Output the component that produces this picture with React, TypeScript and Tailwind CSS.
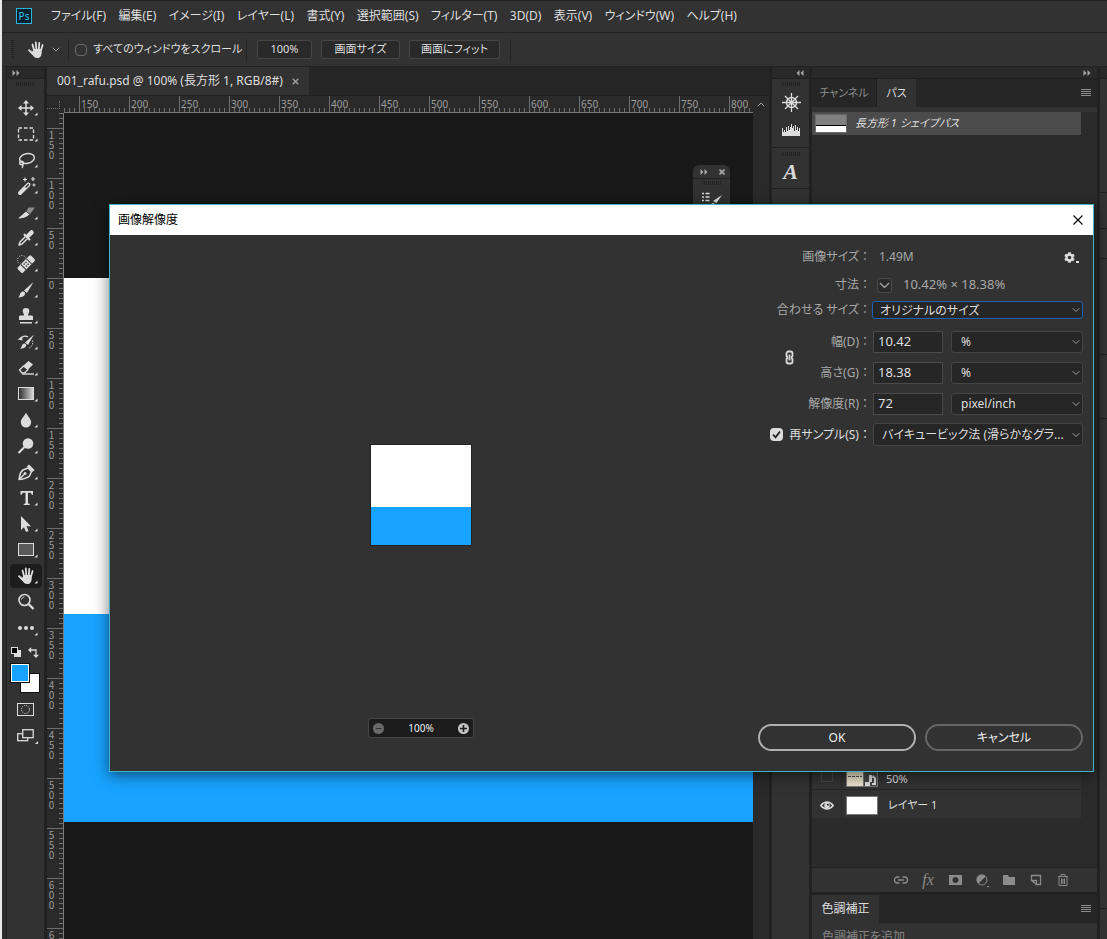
import { ReactNode } from 'react';
import { FaCog } from 'react-icons/fa';

const MENU = [
    'ファイル(F)',
    '編集(E)',
    'イメージ(I)',
    'レイヤー(L)',
    '書式(Y)',
    '選択範囲(S)',
    'フィルター(T)',
    '3D(D)',
    '表示(V)',
    'ウィンドウ(W)',
    'ヘルプ(H)',
];

const H_RULER = [150, 200, 250, 300, 350, 400, 450, 500, 550, 600, 650, 700, 750, 800];
const V_RULER = [150, 100, 50, 0, 50, 100, 150, 200, 250, 300, 350, 400, 450, 500, 550, 600, 650];

const HandShape = () => (
    <g>
        <path d="M11.5 11.5 13 14.5V11h8.5v4.5c0 2.500-1.500 4.500-4 4.500-3 0-4-1.500-5-3.500z" fill="#dcdcdc" />
        <path
            d="M14 12 12.500 6.500M16.300 11 15.800 4.500M18.800 11 19.300 4.800M21 12.500 22.600 7M12.800 16 9 12.200"
            fill="none"
            stroke="#dcdcdc"
            strokeWidth="1.800"
            strokeLinecap="round"
        />
        <path d="M10.500 13.500 14 18l4 2 3-2.500.5-4" fill="#dcdcdc" />
    </g>
);

type Tool = { label: string; icon: ReactNode; active?: boolean; plain?: boolean };

const TOOLS: Tool[] = [
    {
        label: '移動ツール',
        icon: (
            <>
                <path d="M16 6v12M10 12h12" stroke="#dcdcdc" strokeWidth="1.500" />
                <path d="m16 4 3 3.500h-6zM16 20l3-3.500h-6zM8 12l3.500-3v6zM24 12l-3.500-3v6z" fill="#dcdcdc" />
            </>
        ),
    },
    {
        label: '長方形選択ツール',
        icon: <rect x="8.500" y="6" width="15" height="12" fill="none" stroke="#dcdcdc" strokeWidth="1.300" strokeDasharray="3.500 2" />,
    },
    {
        label: 'なげなわツール',
        icon: (
            <g fill="none" stroke="#dcdcdc" strokeWidth="1.400">
                <ellipse cx="17" cy="10.500" rx="7.500" ry="4.800" transform="rotate(-12 17 10.500)" />
                <circle cx="11.500" cy="15" r="1.800" />
                <path d="M12.500 16.500c1 1.500.5 2.500-.5 3.500" />
            </g>
        ),
    },
    {
        label: '自動選択ツール',
        icon: (
            <>
                <path d="m10 19 8.500-8.500" stroke="#dcdcdc" strokeWidth="4" strokeLinecap="round" />
                <path d="m16 13 2.500-2.500" stroke="#323232" strokeWidth="1.400" strokeLinecap="round" />
                <path d="M15 3.500v4M13 5.500h4M23 3v4M21 5h4M24 9.500v3M22.500 11h3" stroke="#dcdcdc" strokeWidth="1.200" />
            </>
        ),
    },
    {
        label: 'スライスツール',
        icon: (
            <>
                <path d="M8 18.500 16 11.500l3.500 3C16 17.500 12 18.500 8 18.500z" fill="#dcdcdc" />
                <path d="M16.500 11 18.500 7.500H25l-5 6.500z" fill="#8c8c8c" />
            </>
        ),
    },
    {
        label: 'スポイトツール',
        icon: (
            <>
                <path d="m9 19 1-3 6-6 2 2-6 6z" fill="none" stroke="#dcdcdc" strokeWidth="1.500" strokeLinejoin="round" />
                <path d="m14.500 8.500 5 5" stroke="#dcdcdc" strokeWidth="2" strokeLinecap="round" />
                <path d="m18.500 9.500 3-3" stroke="#dcdcdc" strokeWidth="4.500" strokeLinecap="round" />
            </>
        ),
    },
    {
        label: 'スポット修復ブラシツール',
        icon: (
            <>
                <circle cx="12" cy="8" r="4.500" fill="none" stroke="#dcdcdc" strokeWidth="1" strokeDasharray="1 1.500" />
                <g transform="rotate(-45 16 12)">
                    <rect x="6.500" y="8.500" width="19" height="7.500" rx="1.500" fill="#dcdcdc" />
                    <path d="M12 8.500v7.500M20 8.500v7.500" stroke="#323232" strokeWidth="1" />
                    <path d="M14 10.700h4M14 13.700h4" stroke="#323232" strokeWidth="1.400" strokeDasharray="1.400 1.200" />
                </g>
            </>
        ),
    },
    {
        label: 'ブラシツール',
        icon: (
            <>
                <path d="M23.500 4 17 15l-3-2.500z" fill="#dcdcdc" />
                <path d="M13.200 13.500c1.600.3 2.300 1.400 1.800 2.800-.8 2.200-3.500 3.200-7 3.200 1.500-1 1.500-2 2-3.500.6-1.600 1.800-2.700 3.200-2.500z" fill="#dcdcdc" />
            </>
        ),
    },
    {
        label: 'コピースタンプツール',
        icon: (
            <path
                d="M16 4a3.300 3.300 0 0 1 3.300 3.300c0 1.500-1.300 2.200-1.300 4.200h3.500c1 0 1.500.5 1.500 1.500v3H9v-3c0-1 .5-1.500 1.500-1.500H14c0-2-1.300-2.700-1.300-4.200A3.300 3.300 0 0 1 16 4zM10 18h12v1.500H10z"
                fill="#dcdcdc"
            />
        ),
    },
    {
        label: 'ヒストリーブラシツール',
        icon: (
            <>
                <path d="M24 4.500 18 15l-3-2.500z" fill="#dcdcdc" />
                <path d="M14.500 13.500c1.500.3 2 1.400 1.500 2.600-.8 1.800-3 2.700-6 2.700 1.400-1 1.300-1.700 1.800-3 .5-1.300 1.500-2.500 2.700-2.300z" fill="#dcdcdc" />
                <path d="M10 9c2-3 5.500-3.300 8-2" fill="none" stroke="#dcdcdc" strokeWidth="1.400" />
                <path d="m7.500 9.500 4.500-3 .5 4z" fill="#dcdcdc" />
                <path d="M22.500 10.500c1 3-.5 6.500-4 8" fill="none" stroke="#dcdcdc" strokeDasharray="1.300 1.300" />
            </>
        ),
    },
    {
        label: '消しゴムツール',
        icon: (
            <>
                <path d="m13.500 9.500 5-4.500 4.500 3.500-5 5z" fill="#dcdcdc" />
                <path d="m13.500 10-4 4 2.500 3h2.500l3.500-3.500z" fill="none" stroke="#dcdcdc" strokeWidth="1.300" strokeLinejoin="round" />
                <path d="M12 18h12" stroke="#dcdcdc" strokeWidth="1.400" />
            </>
        ),
    },
    {
        label: 'グラデーションツール',
        icon: (
            <>
                <defs>
                    <linearGradient id="grad">
                        <stop offset="0" stopColor="#2a2a2a" />
                        <stop offset="1" stopColor="#dcdcdc" />
                    </linearGradient>
                </defs>
                <rect x="8.500" y="5.500" width="15" height="12" fill="url(#grad)" stroke="#dcdcdc" />
            </>
        ),
    },
    {
        label: 'ぼかしツール',
        icon: <path d="M16 4.500c1 3 5.200 6.500 5.200 9.700a5.200 5.200 0 0 1-10.400 0C10.800 11 15 7.500 16 4.500z" fill="#dcdcdc" />,
    },
    {
        label: '覆い焼きツール',
        icon: (
            <>
                <circle cx="18" cy="9.500" r="5.300" fill="#dcdcdc" />
                <path d="m8.500 19 6-6" stroke="#dcdcdc" strokeWidth="2" />
            </>
        ),
    },
    {
        label: 'ペンツール',
        icon: (
            <>
                <path d="M9 19.500c.5-4 1.500-8 4-9.500l5-2 3.500 3.500-2 4.500c-2 2.300-6 3-10.500 3.500zm0 0 5-5" fill="none" stroke="#dcdcdc" strokeWidth="1.500" strokeLinejoin="round" />
                <circle cx="15" cy="13.500" r="1.500" fill="#dcdcdc" />
                <path d="m18 5.500 5.500 5.500" stroke="#dcdcdc" strokeWidth="3" />
            </>
        ),
    },
    {
        label: '横書き文字ツール',
        icon: (
            <path d="M10.500 5H23v3.800h-1.300c-.2-1.500-.8-2.100-2-2.100H18v10c0 .8.400 1 1.800 1.100v1.200h-6.100v-1.200c1.400-.1 1.800-.3 1.800-1.100v-10h-1.700c-1.200 0-1.800.6-2 2.100h-1.300z" fill="#dcdcdc" />
        ),
    },
    {
        label: 'パスコンポーネント選択ツール',
        icon: <path d="M11 4v14l3-2.800 2 4.800 2.500-1-2-4.700H21z" fill="#dcdcdc" />,
    },
    {
        label: '長方形ツール',
        icon: <rect x="8.500" y="5.500" width="15" height="12" fill="#5a5a5a" stroke="#dcdcdc" />,
    },
    { label: '手のひらツール', icon: <HandShape />, active: true },
    {
        label: 'ズームツール',
        plain: true,
        icon: (
            <g fill="none" stroke="#dcdcdc">
                <circle cx="14.500" cy="10" r="5.500" strokeWidth="1.600" />
                <path d="m18.500 14 5 5" strokeWidth="2.400" />
                <path d="M11.500 9.500c.3-1.500 1.300-2.300 2.800-2.500" />
            </g>
        ),
    },
    {
        label: 'ツールバーを編集',
        icon: (
            <g fill="#dcdcdc">
                <circle cx="10" cy="12" r="2" />
                <circle cx="16" cy="12" r="2" />
                <circle cx="22" cy="12" r="2" />
            </g>
        ),
    },
];

const Grip = () => (
    <div className="mx-auto h-1 w-[19px] bg-[repeating-linear-gradient(90deg,#242424_0_1px,transparent_1px_2px)]" />
);

const Arrows = ({ left = false }: { left?: boolean }) => (
    <svg width="8" height="6" viewBox="0 0 8 6" className={left ? 'rotate-180' : ''}>
        <path d="M.5 0 3.500 3 .5 6zM4.500 0l3 3-3 3z" fill="#a8a8a8" />
    </svg>
);

const Chevron = ({ className = '', size = 8 }: { className?: string; size?: number }) => (
    <svg width={size} height={size * 0.625} viewBox="0 0 8 5" className={className}>
        <path d="m.7.7 3.300 3.300L7.300.7" fill="none" stroke="#a0a0a0" />
    </svg>
);

const Burger = () => (
    <button aria-label="パネルメニュー">
        <svg width="10" height="8" viewBox="0 0 10 8">
            <path d="M0 .5h10M0 2.500h10M0 4.500h10M0 6.500h10" stroke="#8c8c8c" />
        </svg>
    </button>
);

const Toolbar = () => (
    <aside className="flex w-[37px] shrink-0 flex-col bg-[#323232]">
        <div className="flex h-3 shrink-0 items-center border-b border-[#222] bg-[#292929] pl-[5px]">
            <Arrows />
        </div>
        <div className="pt-[3px] pb-[9px]">
            <Grip />
        </div>
        {TOOLS.map(({ label, icon, active, plain }) => (
            <button key={label} aria-label={label} className="flex h-[26px] shrink-0 items-center pl-[3px]">
                <svg width="32" height="24" viewBox="0 0 32 24" className={active ? 'rounded-sm bg-[#1d1d1d]' : ''}>
                    {icon}
                    {!plain && <path d="M27.500 16.500v3h-3z" fill="#dcdcdc" />}
                </svg>
            </button>
        ))}
        <div className="flex h-[22px] shrink-0 items-center justify-between pr-[5px] pl-1">
            <button aria-label="初期設定の描画色と背景色">
                <svg width="10" height="10" viewBox="0 0 10 10">
                    <rect x="3" y="3" width="7" height="7" fill="#dcdcdc" />
                    <rect x=".5" y=".5" width="6" height="6" fill="#000" stroke="#dcdcdc" />
                </svg>
            </button>
            <button aria-label="描画色と背景色を入れ替え">
                <svg width="11" height="11" viewBox="0 0 11 11">
                    <path d="M2.500 3H8v5.500" fill="none" stroke="#dcdcdc" strokeWidth="1.300" />
                    <path d="m0 3 3.200-3v6zM8 11 5 7.700h6z" fill="#dcdcdc" />
                </svg>
            </button>
        </div>
        <svg width="30" height="30" viewBox="0 0 30 30" className="ml-[3px] shrink-0">
            <rect x="10.500" y="10.500" width="19" height="19" fill="#fff" stroke="#111" />
            <rect x=".5" y=".5" width="19" height="19" fill="#111" stroke="#111" />
            <rect x="1.500" y="1.500" width="17" height="17" fill="#17a3ff" stroke="#fff" />
        </svg>
        <button aria-label="クイックマスク" className="mt-[10px] ml-[10px]">
            <svg width="17" height="13" viewBox="0 0 17 13">
                <rect x=".5" y=".5" width="16" height="12" fill="none" stroke="#dcdcdc" />
                <circle cx="8.500" cy="6.500" r="4" fill="none" stroke="#dcdcdc" strokeDasharray="1 1.100" />
            </svg>
        </button>
        <button aria-label="スクリーンモード" className="mt-[12px] ml-[10px]">
            <svg width="22" height="17" viewBox="0 0 22 17">
                <rect x=".7" y="5.700" width="10" height="7" fill="none" stroke="#dcdcdc" strokeWidth="1.300" />
                <rect x="5.700" y="1.700" width="10.500" height="8" fill="#323232" stroke="#dcdcdc" strokeWidth="1.300" />
                <path d="M21 13v3h-3z" fill="#dcdcdc" />
            </svg>
        </button>
    </aside>
);

const Workspace = () => (
    <main className="relative flex min-w-0 flex-1 flex-col bg-[#262626]">
        <div className="flex h-7 shrink-0">
            <div className="flex w-[262px] items-center justify-between bg-[#323232] px-[10px] text-[12px] text-[#dedede]">
                <span className="whitespace-nowrap">001_rafu.psd @ 100% (長方形 1, RGB/8#)</span>
                <button aria-label="閉じる">
                    <svg width="7" height="7" viewBox="0 0 7 7">
                        <path d="m.7.7 5.600 5.600M6.300.7.7 6.300" stroke="#9a9a9a" strokeWidth="1.500" />
                    </svg>
                </button>
            </div>
        </div>
        <div className="flex h-[18px] shrink-0 border-t border-[#1f1f1f] bg-[#2a2a2a]">
            <div className="flex w-[17px] shrink-0">
                <div className="mt-[5px] h-[8px] w-[13px] border-r border-b border-dotted border-[#6e6e6e]" />
            </div>
            <div className="flex w-[689px] min-w-0 shrink overflow-hidden border-b border-[#7a7a7a] text-[10px] leading-4 text-[#9c9c9c]">
                <div className="w-[15px] shrink-0 bg-[repeating-linear-gradient(90deg,#6e6e6e_0_1px,transparent_1px_5px)] bg-[length:100%_4px] bg-bottom bg-no-repeat" />
                {H_RULER.map((n) => (
                    <div
                        key={n}
                        className="w-[50px] shrink-0 border-l border-[#6e6e6e] bg-[repeating-linear-gradient(90deg,transparent_0_4px,#6e6e6e_4px_5px)] bg-[length:100%_4px] bg-bottom bg-no-repeat pl-px"
                    >
                        {n}
                    </div>
                ))}
            </div>
            <div className="flex flex-1 items-center justify-center">
                <Chevron className="rotate-180" />
            </div>
        </div>
        <div className="flex min-h-0 flex-1">
            <div className="flex w-[17px] shrink-0 flex-col overflow-hidden border-r border-[#7a7a7a] bg-[#2a2a2a] font-['Noto_Sans_CJK_JP',sans-serif] text-[10px] text-[#9c9c9c]">
                <div className="h-[15px] shrink-0 bg-[repeating-linear-gradient(#6e6e6e_0_1px,transparent_1px_5px)] bg-[length:4px_100%] bg-right bg-no-repeat" />
                {V_RULER.map((n, i) => (
                    <div
                        key={i}
                        className="flex h-[50px] shrink-0 border-t border-[#6e6e6e] bg-[repeating-linear-gradient(transparent_0_4px,#6e6e6e_4px_5px)] bg-[length:4px_100%] bg-right bg-no-repeat pt-px"
                    >
                        <span className="w-2 leading-[8px] [text-orientation:upright] [writing-mode:vertical-rl]">{n}</span>
                    </div>
                ))}
            </div>
            <div className="flex min-w-0 flex-1 flex-col bg-[#191919]">
                <div className="h-[165px] shrink-0" />
                <div className="h-[336px] shrink-0 bg-white" />
                <div className="h-[208px] shrink-0 bg-[#17a3ff]" />
            </div>
            <div className="w-4 shrink-0 bg-[#2a2a2a]" />
        </div>
        {/* floating brush panel */}
        <div className="absolute top-[98px] right-[39px] w-[37px] rounded-t-md bg-[#323232]">
            <div className="flex h-[14px] items-center justify-between border-b border-[#222] pr-[5px] pl-[7px]">
                <Arrows />
                <svg width="6" height="6" viewBox="0 0 6 6">
                    <path d="m.5.5 5 5M5.500.5l-5 5" stroke="#a8a8a8" strokeWidth="1.600" />
                </svg>
            </div>
            <div className="pt-[2px]">
                <Grip />
            </div>
            <svg width="22" height="20" viewBox="0 0 22 20" className="mt-1 ml-2">
                <path d="M1 4.500h2M1 8h2M1 11.500h2M4.500 4.500h4M4.500 8h4M4.500 11.500h4" stroke="#dcdcdc" strokeWidth="1.600" />
                <path d="M21 6 15.500 14 12 12z" fill="#dcdcdc" />
                <path d="M9 18c1-4 3-5 5-3-1 2-3 3-5 3z" fill="#dcdcdc" />
            </svg>
        </div>
    </main>
);

const IconDock = () => (
    <aside className="flex w-[37px] shrink-0 flex-col bg-[#323232]">
        <div className="flex h-3 items-center justify-end border-b border-[#1f1f1f] bg-[#292929] pr-[5px]">
            <Arrows left />
        </div>
        <div className="flex h-[69px] flex-col items-center border-b border-[#1f1f1f] pt-[3px]">
            <Grip />
            <svg width="19" height="19" viewBox="0 0 19 19" className="mt-[7px] ml-px" fill="none" stroke="#dcdcdc">
                <circle cx="9.500" cy="9.500" r="5" strokeWidth="1.500" />
                <path d="M9.500 0v19M0 9.500h19M3 3l13 13M16 3 3 16" strokeWidth="1.300" />
                <circle cx="9.500" cy="9.500" r="1.500" fill="#dcdcdc" />
            </svg>
            <svg width="18" height="12" viewBox="0 0 18 12" className="mt-3 ml-px">
                <path d="M0 12V4h1v4h1V6h1v2h1V3h1v4h1V2h1v4h1V3h1V0h1v4h1V2h1v5h1V1h1v5h1V3h1v4h1V4h1v8z" fill="#dcdcdc" />
            </svg>
        </div>
        <div className="flex h-[41px] flex-col items-center border-b border-[#1f1f1f] pt-1">
            <Grip />
            <span className="mt-1 font-['Liberation_Serif',serif] text-[22px] leading-6 font-bold text-[#dcdcdc] italic">A</span>
        </div>
    </aside>
);

const LayerButton = ({ label, children }: { label: string; children: ReactNode }) => (
    <button aria-label={label}>
        <svg width="16" height="16" viewBox="0 0 16 16" fill="none" stroke="#8c8c8c">
            {children}
        </svg>
    </button>
);

const Panels = () => (
    <aside className="flex w-[285px] shrink-0 flex-col bg-[#2b2b2b] text-[11px] text-[#dedede]">
        <div className="flex h-3 shrink-0 items-center justify-end border-b border-[#1f1f1f] bg-[#292929] pr-[6px]">
            <Arrows />
        </div>
        <section className="flex min-h-0 flex-1 flex-col">
            <div className="flex h-7 shrink-0 items-stretch bg-[#262626] pr-[6px]">
                <button className="w-[65px] border-r border-[#1f1f1f] text-[#8c8c8c] [font-feature-settings:'palt']">チャンネル</button>
                <button className="w-[39px] bg-[#323232] [font-feature-settings:'palt']">パス</button>
                <div className="flex flex-1 items-center justify-end">
                    <Burger />
                </div>
            </div>
            <div className="h-[5px] shrink-0 bg-[#323232]" />
            <div className="mr-4 flex h-[23px] shrink-0 items-center gap-2 bg-[#4b4b4b] pl-[3px]">
                <div className="flex h-[19px] w-8 flex-col border border-[#6a6a6a] bg-[#808080]">
                    <div className="mt-auto h-[7px] border-t border-black bg-white" />
                </div>
                <span className="italic [font-feature-settings:'palt']">長方形 1 シェイプパス</span>
            </div>
        </section>
        <section className="shrink-0">
            {/* layer rows */}
            <div className="mr-4 flex h-[30px] items-center border-b border-[#252525] bg-[#323232]">
                <div className="flex w-[30px] items-end justify-center self-stretch border-r border-[#292929] pb-[7px]">
                    <input type="checkbox" aria-label="表示" className="size-3 appearance-none border border-[#454545]" />
                </div>
                <svg width="32" height="20" viewBox="0 0 32 20" className="mb-[2px] ml-1 self-end">
                    <rect width="32" height="20" fill="#777" />
                    <rect x="1" y="1" width="16" height="18" fill="#e6dfc8" />
                    <path d="M2 9.500h14" stroke="#555" strokeDasharray="3 1" />
                    <rect x="18" y="1" width="13" height="18" fill="#444" />
                    <path d="M19 15h5v4h-5zM23 8h3v7h-3zM27 8l3 3v7h-4v-2h2v-5h-2z" fill="#dcdcdc" />
                </svg>
                <span className="ml-2 self-end pb-[2px]">50%</span>
            </div>
            <div className="mr-4 flex h-[28px] items-center bg-[#323232]">
                <button aria-label="レイヤーの表示/非表示" className="flex w-[30px] items-center justify-center self-stretch border-r border-[#292929] pt-[2px]">
                    <svg width="14" height="9" viewBox="0 0 14 9">
                        <path d="M.8 4.500C3 1.800 5 1 7 1s4 .8 6.200 3.500C11 7.200 9 8 7 8S3 7.200.8 4.500z" fill="none" stroke="#dcdcdc" strokeWidth="1.500" />
                        <circle cx="7" cy="4.500" r="2.700" fill="#dcdcdc" />
                        <circle cx="7.800" cy="3.800" r="1" fill="#323232" />
                    </svg>
                </button>
                <div className="mt-[2px] ml-1 h-[19px] w-8 border border-[#777] bg-white" />
                <span className="ml-[10px] pt-[3px] [font-feature-settings:'palt']">レイヤー 1</span>
            </div>
            <div className="h-[49px]" />
            <div className="flex h-[25px] items-center justify-end gap-[11px] border-t border-[#222] bg-[#323232] pr-[26px]">
                <LayerButton label="レイヤーをリンク">
                    <path d="M6.500 5h-2a3 3 0 0 0 0 6h2M9.500 5h2a3 3 0 0 1 0 6h-2M5 8h6" strokeWidth="1.300" />
                </LayerButton>
                <button aria-label="レイヤースタイル" className="w-4 font-['Liberation_Serif',serif] text-[16px] leading-4 text-[#8c8c8c] italic">
                    fx
                </button>
                <LayerButton label="レイヤーマスク">
                    <path d="M2 3h13v10H2zM8.500 5a3 3 0 1 0 0 6 3 3 0 0 0 0-6z" fill="#8c8c8c" fillRule="evenodd" stroke="none" />
                </LayerButton>
                <LayerButton label="調整レイヤー">
                    <circle cx="8" cy="8" r="5" />
                    <path d="M11.500 4.500a5 5 0 1 0-7 7z" fill="#8c8c8c" stroke="none" />
                    <path d="M12.500 14h3L14 15.500z" fill="#8c8c8c" stroke="none" />
                </LayerButton>
                <LayerButton label="新規グループ">
                    <path d="M2 3h5l1 2h6v8H2z" fill="#8c8c8c" stroke="none" />
                </LayerButton>
                <LayerButton label="新規レイヤー">
                    <path d="M3.500 8.500v-5h9v9h-4zm0 0h5v4" strokeWidth="1.300" />
                </LayerButton>
                <LayerButton label="レイヤーを削除">
                    <path d="M3 4.500h10M6 4V2.500h4V4M4 5v8.500h8V5M6.500 6.500v5.500M8 6.500v5.500M9.500 6.500v5.500" />
                </LayerButton>
            </div>
        </section>
        <section className="h-[47px] shrink-0 overflow-hidden border-t-[3px] border-[#222] bg-[#323232] text-[12px]">
            <div className="flex h-7 items-center bg-[#262626] pr-[6px]">
                <button className="h-full w-[67px] bg-[#323232]">色調補正</button>
                <div className="flex flex-1 justify-end">
                    <Burger />
                </div>
            </div>
            <p className="pt-[6px] pl-[10px] leading-4 text-[#858585] [font-feature-settings:'palt']">色調補正を追加</p>
        </section>
    </aside>
);

type PickProps = { id: string; label?: string; options: string[]; className: string };

const Pick = ({ id, label, options, className }: PickProps) => (
    <div className="relative flex min-w-0 flex-1">
        <select
            id={id}
            aria-label={label}
            className={`w-full appearance-none rounded-[3px] border bg-[#262626] text-[12px] text-[#dedede] outline-none [font-feature-settings:'palt'] ${className}`}
        >
            {options.map((o) => (
                <option key={o}>{o}</option>
            ))}
        </select>
        <Chevron className="pointer-events-none absolute top-1/2 right-[3px] -translate-y-1/2" />
    </div>
);

const Label = ({ htmlFor, children }: { htmlFor?: string; children: string }) => (
    <label htmlFor={htmlFor} className="flex w-[139px] shrink-0 justify-end whitespace-nowrap">
        <span className="[font-feature-settings:'palt']">{children}</span>：
    </label>
);

const field = 'ml-[2px] h-[22px] w-[70px] border border-[#4a4a4a] bg-[#262626] px-1 pb-px text-[13px] text-[#dedede] outline-none';

const ImageSizeDialog = () => (
    <div
        role="dialog"
        aria-label="画像解像度"
        className="absolute top-[204px] right-[13px] bottom-[167px] left-[109px] flex flex-col border border-[#3fb2c4] bg-[#323232] shadow-[0_3px_14px_rgba(0,0,0,0.55)]"
    >
        <header className="flex h-[30px] shrink-0 items-center justify-between bg-white pr-[10px] pl-2 text-[12px] text-black">
            <h1>画像解像度</h1>
            <button aria-label="閉じる">
                <svg width="10" height="10" viewBox="0 0 10 10">
                    <path d="m.5.5 9 9M9.500.5l-9 9" stroke="#000" strokeWidth="1.100" />
                </svg>
            </button>
        </header>
        <div className="flex min-h-0 flex-1">
            <div className="flex flex-1 flex-col items-center justify-between pt-[210px] pb-[33px]">
                <div className="size-[100px] bg-[#17a3ff] outline outline-[#222]">
                    <div className="h-[62px] bg-white" />
                </div>
                <div className="flex h-5 w-[106px] items-center justify-between rounded-[3px] border border-[#464646] bg-[#1c1c1c] px-1 text-[10px] text-[#eee]">
                    <button aria-label="縮小">
                        <svg width="11" height="11" viewBox="0 0 11 11">
                            <circle cx="5.500" cy="5.500" r="5.500" fill="#6a6a6a" />
                            <path d="M2.500 5.500h6" stroke="#333" />
                        </svg>
                    </button>
                    <span>100%</span>
                    <button aria-label="拡大">
                        <svg width="11" height="11" viewBox="0 0 11 11">
                            <circle cx="5.500" cy="5.500" r="5.500" fill="#c4c4c4" />
                            <path d="M2 5.500h7M5.500 2v7" stroke="#1c1c1c" strokeWidth="1.600" />
                        </svg>
                    </button>
                </div>
            </div>
            <form className="flex w-[361px] shrink-0 flex-col pt-2 pr-[10px] pb-5 text-[12px] text-[#a8a8a8]" onSubmit={(e) => e.preventDefault()}>
                <div className="flex h-7 items-center">
                    <Label>画像サイズ</Label>
                    <span className="ml-2 flex-1">1.49M</span>
                    <button type="button" aria-label="設定" className="flex items-end gap-px pr-1 text-[#dcdcdc]">
                        <FaCog size={11} />
                        <span className="h-[2px] w-[3px] bg-[#dcdcdc]" />
                    </button>
                </div>
                <div className="flex h-7 items-center">
                    <Label>寸法</Label>
                    <button type="button" aria-label="単位" className="ml-[6px] flex size-[15px] items-center justify-center rounded-[3px] border border-[#4a4a4a] bg-[#2a2a2a]">
                        <Chevron size={11} className="shrink-0" />
                    </button>
                    <span className="ml-[11px] text-[13px]">10.42% × 18.38%</span>
                </div>
                <div className="flex h-[22px] items-center">
                    <Label htmlFor="fit">合わせる サイズ</Label>
                    <div className="ml-px flex flex-1">
                        <Pick id="fit" options={['オリジナルのサイズ']} className="h-[18px] border-[#1f62b5] pb-px pl-[7px]" />
                    </div>
                </div>
                <div className="mt-[5px] flex items-center">
                    <svg width="9" height="15" viewBox="0 0 9 15" className="ml-[53px] shrink-0" fill="none" stroke="#dcdcdc" strokeWidth="1.800">
                        <path d="M1.500 5.500v-2a2 2 0 0 1 2-2h2a2 2 0 0 1 2 2v2c0 1-.5 1.500-1.500 1.500M1.500 9.500v2a2 2 0 0 0 2 2h2a2 2 0 0 0 2-2v-2c0-1-.5-1.500-1.500-1.500M1.500 5.500c0 1 .5 1.500 1.500 1.500M1.500 9.500c0-1 .5-1.500 1.500-1.500M4.500 4.500v6" />
                    </svg>
                    <div className="-ml-[62px] flex-1">
                        <div className="flex h-[31px] items-center">
                            <Label htmlFor="width">幅(D)</Label>
                            <input id="width" defaultValue="10.42" className={field} />
                            <div className="ml-2 flex flex-1">
                                <Pick id="width-unit" label="幅の単位" options={['%']} className="h-[22px] border-[#454545] pl-[9px]" />
                            </div>
                        </div>
                        <div className="flex h-[31px] items-center">
                            <Label htmlFor="height">高さ(G)</Label>
                            <input id="height" defaultValue="18.38" className={field} />
                            <div className="ml-2 flex flex-1">
                                <Pick id="height-unit" label="高さの単位" options={['%']} className="h-[22px] border-[#454545] pl-[9px]" />
                            </div>
                        </div>
                    </div>
                </div>
                <div className="flex h-[31px] items-center">
                    <Label htmlFor="res">解像度(R)</Label>
                    <input id="res" defaultValue="72" className={field} />
                    <div className="ml-2 flex flex-1">
                        <Pick id="res-unit" label="解像度の単位" options={['pixel/inch']} className="h-[22px] border-[#454545] pl-[9px]" />
                    </div>
                </div>
                <div className="flex h-[31px] items-center text-[#dedede]">
                    <label className="flex w-[139px] shrink-0 items-center justify-end whitespace-nowrap">
                        <span className="relative mr-[6px] flex">
                            <input type="checkbox" defaultChecked className="size-[13px] appearance-none rounded-sm bg-[#dcdcdc]" />
                            <svg width="13" height="13" viewBox="0 0 13 13" className="pointer-events-none absolute inset-0">
                                <path d="m3 6.500 2.500 2.800L10 3.500" fill="none" stroke="#222" strokeWidth="1.800" />
                            </svg>
                        </span>
                        <span className="[font-feature-settings:'palt']">再サンプル(S)</span>：
                    </label>
                    <div className="ml-[2px] flex flex-1">
                        <Pick
                            id="resample"
                            label="再サンプル方式"
                            options={['バイキュービック法 (滑らかなグラ...']}
                            className="h-[23px] border-[#454545] pl-2"
                        />
                    </div>
                </div>
                <div className="mt-auto flex gap-[9px] pl-[26px] text-[12px] text-[#eee]">
                    <button className="h-[27px] flex-1 rounded-full border-2 border-[#b0b0b0]">OK</button>
                    <button type="button" className="h-[27px] flex-1 rounded-full border-2 border-[#666] [font-feature-settings:'palt']">
                        キャンセル
                    </button>
                </div>
            </form>
        </div>
    </div>
);

const optionButton = "h-[19px] rounded-[3px] border border-[#464646] bg-[#292929] [font-feature-settings:'palt']";

export default function App() {
    return (
        <div className="relative flex h-screen overflow-hidden bg-[#e8e8e8] pl-[2px] font-['Noto_Sans','Noto_Sans_CJK_JP',sans-serif]">
            <div className="flex min-w-0 flex-1 flex-col bg-[#323232]">
                <nav className="flex h-[33px] shrink-0 items-center border-t border-b border-[#222] pb-[2px] pl-[14px] text-[12px] text-[#dedede]">
                    <span className="mr-[19px] flex h-4 w-4 shrink-0 items-center justify-center border border-[#26b4dc] bg-[#06202e] text-[10px] leading-none text-[#35c8f0]">
                        Ps
                    </span>
                    <div className="flex w-[686px] justify-between whitespace-nowrap [font-feature-settings:'palt']">
                        {MENU.map((item) => (
                            <button key={item}>{item}</button>
                        ))}
                    </div>
                </nav>
                <div className="flex h-[34px] shrink-0 items-center border-b border-[#222] pl-[9px] text-[11px] text-[#dedede]">
                    <div className="h-5 w-[3px] bg-[repeating-linear-gradient(#242424_0_1px,transparent_1px_2px)]" />
                    <svg width="32" height="24" viewBox="0 0 32 24" className="ml-[6px]">
                        <HandShape />
                    </svg>
                    <Chevron />
                    <label className="ml-2 flex h-[22px] w-[178px] items-center gap-[6px] border-l border-[#252525] pl-[6px] whitespace-nowrap [font-feature-settings:'palt']">
                        <input type="checkbox" className="size-3 appearance-none rounded-sm border border-[#6a6a6a]" />
                        すべてのウィンドウをスクロール
                    </label>
                    <div className="flex h-[22px] items-center gap-[9px] border-x border-[#252525] px-[10px]">
                        <button className={`w-[55px] ${optionButton}`}>100%</button>
                        <button className={`w-[79px] ${optionButton}`}>画面サイズ</button>
                        <button className={`w-[91px] ${optionButton}`}>画面にフィット</button>
                    </div>
                </div>
                <div className="flex min-h-0 flex-1">
                    <div className="w-[5px] shrink-0 border-r border-[#1f1f1f] bg-[#2b2b2b]" />
                    <Toolbar />
                    <div className="w-[3px] shrink-0 bg-[#222]" />
                    <Workspace />
                    <div className="w-[3px] shrink-0 bg-[#222]" />
                    <IconDock />
                    <div className="w-[3px] shrink-0 bg-[#222]" />
                    <Panels />
                    <div className="w-[3px] shrink-0 bg-[#222]" />
                    <aside className="flex w-[7px] shrink-0 flex-col divide-y divide-[#1f1f1f] bg-[#323232]">
                        <div className="h-3 bg-[#292929]" />
                        <div className="h-[114px]" />
                        <div className="h-9" />
                        <div className="h-[30px]" />
                        <div className="h-24" />
                        <div className="h-16" />
                        <div className="h-[490px]" />
                        <div className="flex-1" />
                    </aside>
                </div>
            </div>
            <ImageSizeDialog />
        </div>
    );
}
